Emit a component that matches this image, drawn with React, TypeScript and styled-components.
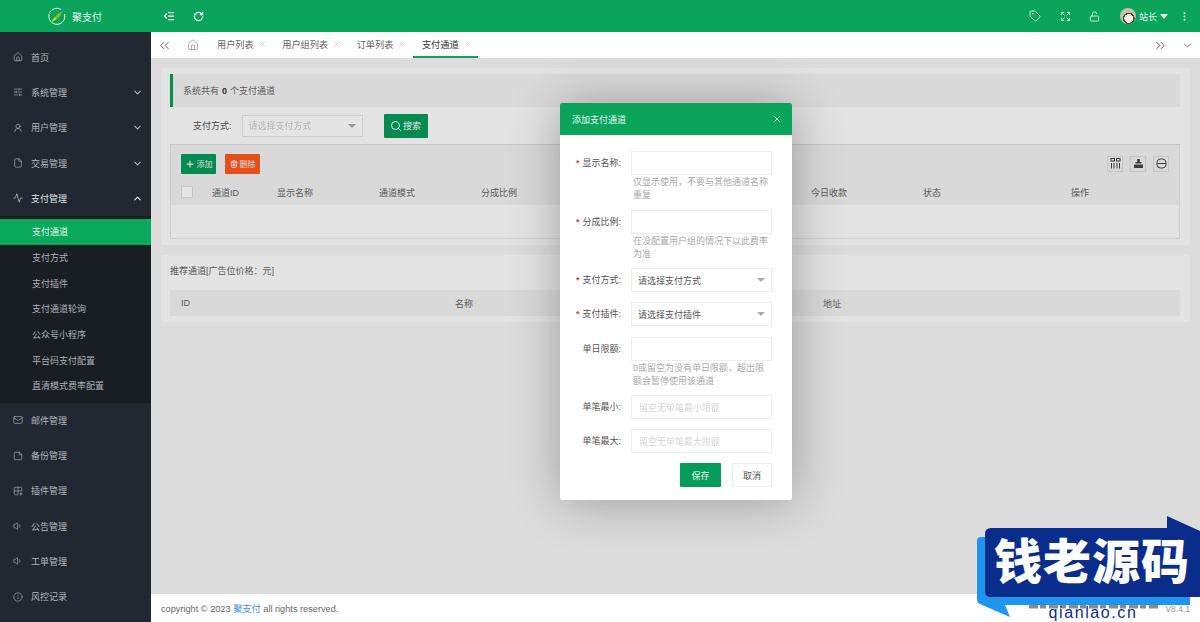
import React from 'react';
import styled, { createGlobalStyle } from 'styled-components';
import {
  Home, SlidersHorizontal, UserRound, File, Activity, Mail, StickyNote, Grid2x2Plus, Volume1, Info,
  ChevronDown, ChevronUp, ChevronsLeft, ChevronsRight, X, Plus, Trash2, Search, Tag, Expand, LockOpen,
  RotateCw, IndentDecrease, EllipsisVertical,
} from 'lucide-react';

const GlobalStyle = createGlobalStyle`
  html, body { margin: 0; padding: 0; height: 100%; overflow: hidden; }
  #root { height: 100%; }
  * { box-sizing: border-box; }
  body { font-family: "Liberation Sans", "Noto Sans CJK SC", sans-serif; font-size: 9px; color: #666; }
`;

const menuTop = [
  { label: '首页', icon: Home },
  { label: '系统管理', icon: SlidersHorizontal, arrow: true },
  { label: '用户管理', icon: UserRound, arrow: true },
  { label: '交易管理', icon: File, arrow: true },
];
const subMenu = ['支付通道', '支付方式', '支付插件', '支付通道轮询', '公众号小程序', '平台码支付配置', '直清模式费率配置'];
const menuBottom = [
  { label: '邮件管理', icon: Mail },
  { label: '备份管理', icon: StickyNote },
  { label: '插件管理', icon: Grid2x2Plus },
  { label: '公告管理', icon: Volume1 },
  { label: '工单管理', icon: Volume1 },
  { label: '风控记录', icon: Info },
];
const tabs = ['用户列表', '用户组列表', '订单列表', '支付通道'];
const columns = [
  { label: '通道ID', w: 65 },
  { label: '显示名称', w: 102 },
  { label: '通道模式', w: 102 },
  { label: '分成比例', w: 330 },
  { label: '今日收款', w: 112 },
  { label: '状态', w: 148 },
  { label: '操作', w: 60 },
];

const Page = styled.div`
  display: flex;
  flex-direction: column;
  width: 1200px;
  height: 622px;
  overflow: hidden;
  position: relative;
`;

const TopBar = styled.header`
  display: flex;
  align-items: center;
  height: 32px;
  flex: none;
  background: #0aa45b;
  color: #fff;
`;

const Brand = styled.div`
  width: 151px;
  display: flex;
  align-items: center;
  gap: 6px;
  padding-left: 48px;
  font-size: 10px;
  color: #e8f7ef;
`;

const TopTools = styled.div`
  display: flex;
  align-items: center;
  gap: 18px;
  padding-left: 12px;
  flex: 1;
`;

const TopRight = styled.div`
  display: flex;
  align-items: center;
  color: #cfeedd;
  padding-right: 10px;
  gap: 18.5px;
`;

const UserBox = styled.div`
  display: flex;
  align-items: center;
  gap: 3px;
  margin-left: 1px;
`;

const Avatar = styled.span`
  width: 16px;
  height: 16px;
  border-radius: 50%;
  background: radial-gradient(circle at 55% 65%, #f4efe6 0 32%, #4a443b 33% 42%, #c8bda9 43%);
`;

const UserName = styled.span`
  display: flex;
  align-items: center;
  gap: 3px;
  font-size: 9px;
  color: #e8f7ef;
  margin-right: 8px;
  &::after {
    content: '';
    border: 4px solid transparent;
    border-top: 5px solid #e8f7ef;
    border-bottom: 0;
  }
`;

const Body = styled.div`
  display: flex;
  flex: 1;
  min-height: 0;
`;

const Sidebar = styled.nav`
  width: 151px;
  flex: none;
  background: #212832;
  padding-top: 7.5px;
  color: #b4b8bd;
`;

const MenuItem = styled.div`
  height: 35.3px;
  display: flex;
  align-items: center;
  padding: 0 8px 0 13px;
  gap: 8px;
  font-size: 9px;
  color: ${p => (p.$open ? '#dfe2e5' : '#b4b8bd')};
`;

const MenuLabel = styled.span`
  flex: 1;
`;

const SubList = styled.div`
  background: #191e22;
  padding: 3px 0 4px;
`;

const SubItem = styled.div`
  height: 25.67px;
  display: flex;
  align-items: center;
  padding-left: 32px;
  font-size: 9px;
  color: ${p => (p.$active ? '#e6f7ee' : '#adb1b5')};
  background: ${p => (p.$active ? '#0aa95c' : 'transparent')};
`;

const Main = styled.main`
  flex: 1;
  min-width: 0;
  display: flex;
  flex-direction: column;
`;

const TabBar = styled.div`
  height: 26px;
  flex: none;
  display: flex;
  align-items: center;
  background: #fff;
  color: #666;
`;

const TabEdge = styled.span`
  width: 26px;
  display: flex;
  justify-content: center;
  align-items: center;
  color: #555;
`;

const TabHome = styled.span`
  width: 31px;
  display: flex;
  justify-content: center;
  color: #777;
`;

const Tab = styled.div`
  height: 26px;
  padding: 0 7.5px 0 9px;
  display: flex;
  align-items: center;
  gap: 5px;
  font-size: 9.2px;
  color: ${p => (p.$active ? '#333' : '#666')};
  border-bottom: 2px solid ${p => (p.$active ? '#0aa45b' : 'transparent')};
  svg { color: #bbb; }
`;

const TabRight = styled.div`
  margin-left: auto;
  display: flex;
  align-items: center;
  gap: 6px;
  color: #555;
`;

const Frame = styled.div`
  flex: 1;
  position: relative;
  min-height: 0;
  background: #f5f5f6;
  padding: 10px 10px 0;
  overflow: hidden;
`;

const Shade = styled.div`
  position: absolute;
  inset: 0;
  background: rgba(0, 0, 0, 0.1);
`;

const Card = styled.section`
  background: #fdfdfd;
  border-radius: 3px;
  padding: 6px 10px 6px 9px;
  margin-bottom: 10px;
`;

const Notice = styled.div`
  height: 33px;
  display: flex;
  align-items: center;
  padding-left: 10px;
  background: #f3f3f3;
  border-left: 3px solid #0a9f58;
  font-size: 9px;
  color: #666;
  b { margin: 0 3px; color: #333; }
`;

const FilterRow = styled.div`
  display: flex;
  align-items: center;
  height: 37px;
  padding-left: 23px;
  gap: 10px;
`;

const FilterLabel = styled.span`
  font-size: 9px;
  color: #555;
`;

const SelectFake = styled.div`
  width: 121px;
  height: 22px;
  border: 1px solid #e6e6e6;
  background: #fff;
  display: flex;
  align-items: center;
  justify-content: space-between;
  padding: 0 6px;
  color: #ccc;
  font-size: 9px;
  &::after {
    content: '';
    border: 4px solid transparent;
    border-top: 4px solid #aaa;
    border-bottom: 0;
  }
`;

const BlurText = styled.span`
  filter: blur(0.7px);
`;

const SearchBtn = styled.button`
  height: 24px;
  width: 44px;
  margin-left: 11px;
  border: 0;
  border-radius: 1px;
  background: #049b5b;
  color: #fff;
  font: inherit;
  display: flex;
  align-items: center;
  justify-content: center;
  gap: 1px;
  padding: 0;
`;

const TableBox = styled.div`
  border: 1px solid #e6e6e6;
  border-top-color: #ddd;
`;

const Toolbar = styled.div`
  height: 34px;
  background: #f2f2f2;
  display: flex;
  align-items: center;
  padding: 3px 10px 0 10px;
  gap: 9px;
`;

const ActionBtn = styled.button`
  height: 20px;
  width: ${p => p.$w}px;
  border: 0;
  border-radius: 1px;
  background: ${p => p.$bg};
  color: #f3f3f3;
  font: inherit;
  font-size: 8px;
  display: flex;
  align-items: center;
  justify-content: center;
  gap: 2px;
  padding: 0;
`;

const ToolIcons = styled.div`
  margin-left: auto;
  display: flex;
  gap: 7px;
`;

const ToolIcon = styled.span`
  width: 16px;
  height: 16px;
  border: 1px solid #ddd;
  display: flex;
  align-items: center;
  justify-content: center;
  color: #444;
`;

const HeadRow = styled.div`
  height: 26px;
  background: #f2f2f2;
  display: flex;
  align-items: center;
  padding-left: 10px;
  font-size: 9px;
  color: #666;
`;

const CheckBox = styled.span`
  width: 12px;
  height: 12px;
  border: 1px solid #ddd;
  background: #fff;
  margin-right: 19px;
`;

const HeadCell = styled.span`
  width: ${p => p.$w}px;
  flex: none;
`;

const EmptyRow = styled.div`
  height: 33px;
`;

const RecTitle = styled.div`
  height: 29px;
  display: flex;
  align-items: center;
  font-size: 9px;
  color: #666;
  padding-bottom: 11px;
`;

const RecHead = styled.div`
  height: 26px;
  background: #f2f2f2;
  display: grid;
  grid-template-columns: 274px 368px 1fr;
  align-items: center;
  padding-left: 11px;
  font-size: 9px;
  color: #666;
`;

const Modal = styled.div`
  position: absolute;
  left: 409px;
  top: 45px;
  width: 232px;
  height: 397px;
  background: #fff;
  border-radius: 2px;
  box-shadow: 1px 1px 50px rgba(0, 0, 0, 0.3);
`;

const ModalHead = styled.div`
  height: 32px;
  background: #0aa45b;
  border-radius: 2px 2px 0 0;
  display: flex;
  align-items: center;
  justify-content: space-between;
  padding: 0 10px 0 12px;
  color: #e6f7ee;
  font-size: 9px;
`;

const ModalForm = styled.div`
  display: flex;
  flex-direction: column;
  padding: 16px 20px 0 0;
`;

const FormRow = styled.div`
  display: flex;
  margin-bottom: ${p => p.$mb}px;
`;

const FormLabel = styled.label`
  width: 71px;
  flex: none;
  padding-top: 6.5px;
  padding-right: 10px;
  text-align: right;
  font-size: 9px;
  color: #555;
  line-height: 11px;
  em { color: #e0492f; font-style: normal; margin-right: 3px; font-weight: bold; }
`;

const FormField = styled.div`
  flex: 1;
  min-width: 0;
`;

const TextInput = styled.div`
  height: 24px;
  border: 1px solid #eee;
  padding: 0 7px;
  display: flex;
  align-items: center;
  font-size: 9px;
  color: #d4d4d4;
`;

const Hint = styled.div`
  font-size: 9px;
  line-height: 12.5px;
  color: #aaa;
  padding: 1px 2px 0;
`;

const ModalSelect = styled(SelectFake)`
  width: 100%;
  height: 24px;
  border-color: #eee;
  color: #555;
`;

const ModalBtns = styled.div`
  display: flex;
  justify-content: flex-end;
  gap: 11px;
  margin-top: 10px;
`;

const SaveBtn = styled.button`
  width: 41px;
  height: 24px;
  border: 0;
  border-radius: 1px;
  background: #049b5b;
  color: #e6f7ee;
  font: inherit;
  padding: 0;
`;

const CancelBtn = styled(SaveBtn)`
  width: 40px;
  background: #fff;
  border: 1px solid #eee;
  color: #555;
`;

const Footer = styled.footer`
  height: 28px;
  flex: none;
  display: flex;
  align-items: center;
  justify-content: space-between;
  padding: 0 10px;
  background: #fff;
  font-size: 9.2px;
  color: #666;
  a { color: #4a90e2; text-decoration: none; }
`;

const Version = styled.span`
  font-size: 8.5px;
  color: #999;
  padding-top: 2px;
`;

const Watermark = styled.svg`
  position: absolute;
  right: 0;
  bottom: 0;
`;

const Field = ({ label, req, mb, children }: { label: string; req?: boolean; mb: number; children: React.ReactNode }) => (
  <FormRow $mb={mb}>
    <FormLabel>{req && <em>*</em>}{label}:</FormLabel>
    <FormField>{children}</FormField>
  </FormRow>
);

const LogoMark = () => (
  <svg width="18" height="18" viewBox="0 0 18 18" fill="none">
    <path d="M13 2.5 A8 8 0 1 0 16.5 7" stroke="#e9f7dd" strokeWidth="1" />
    <path d="M3.5 15 C6 9 10 7 14 4.5 C13 9.5 9 13 3.5 15Z" fill="#7fc31c" />
    <path d="M3.5 15 L7 10.5 L8 12Z" fill="#f0e23a" />
    <circle cx="14.8" cy="3" r="1.6" fill="#1c8fc9" />
  </svg>
);

const ColsIcon = () => (
  <svg width="11" height="11" viewBox="0 0 11 11" fill="none" stroke="currentColor" strokeWidth="1">
    <rect x="1" y="0.5" width="3.5" height="2.5" />
    <rect x="6.5" y="0.5" width="3.5" height="2.5" />
    <path d="M1.5 5V10.5M4 5V10.5M7 5V10.5M9.5 5V10.5" />
  </svg>
);

const ExportIcon = () => (
  <svg width="11" height="11" viewBox="0 0 11 11" fill="currentColor">
    <path d="M4.2 1H6.8V4H8.5V5.5H2.5V4H4.2Z" />
    <path d="M1 6.5H10V10H1Z" />
  </svg>
);

const PrintIcon = () => (
  <svg width="11" height="11" viewBox="0 0 11 11" fill="none" stroke="currentColor" strokeWidth="1">
    <rect x="1" y="1" width="9" height="9" rx="3.5" />
    <path d="M1 5.5H10" />
  </svg>
);

const App = () => {
  return (
    <Page>
      <GlobalStyle />
      <TopBar>
        <Brand><LogoMark />聚支付</Brand>
        <TopTools>
          <IndentDecrease size={12} strokeWidth={2.5} />
          <RotateCw size={11} strokeWidth={2.6} />
        </TopTools>
        <TopRight>
          <Tag size={12} />
          <Expand size={11} />
          <LockOpen size={11} />
          <UserBox>
            <Avatar />
            <UserName>站长</UserName>
            <EllipsisVertical size={11} strokeWidth={2.5} />
          </UserBox>
        </TopRight>
      </TopBar>
      <Body>
        <Sidebar>
          {menuTop.map(({ label, icon: Icon, arrow }) => (
            <MenuItem key={label}>
              <Icon size={10} strokeWidth={1.5} />
              <MenuLabel>{label}</MenuLabel>
              {arrow && <ChevronDown size={11} strokeWidth={2.2} />}
            </MenuItem>
          ))}
          <MenuItem $open>
            <Activity size={10} strokeWidth={1.5} />
            <MenuLabel>支付管理</MenuLabel>
            <ChevronUp size={11} strokeWidth={2.6} />
          </MenuItem>
          <SubList>
            {subMenu.map((s, i) => <SubItem key={s} $active={i === 0}>{s}</SubItem>)}
          </SubList>
          {menuBottom.map(({ label, icon: Icon }) => (
            <MenuItem key={label}>
              <Icon size={10} strokeWidth={1.5} />
              <MenuLabel>{label}</MenuLabel>
            </MenuItem>
          ))}
        </Sidebar>
        <Main>
          <TabBar>
            <TabEdge><ChevronsLeft size={15} strokeWidth={1.5} /></TabEdge>
            <TabHome><Home size={12} strokeWidth={1.2} /></TabHome>
            {tabs.map((t, i) => (
              <Tab key={t} $active={i === 3}>{t}<X size={7} /></Tab>
            ))}
            <TabRight>
              <ChevronsRight size={15} strokeWidth={1.5} />
              <TabEdge><ChevronDown size={13} strokeWidth={1.3} /></TabEdge>
            </TabRight>
          </TabBar>
          <Frame>
            <Card>
              <Notice>系统共有<b>0</b>个支付通道</Notice>
              <FilterRow>
                <FilterLabel>支付方式:</FilterLabel>
                <SelectFake><BlurText>请选择支付方式</BlurText></SelectFake>
                <SearchBtn><Search size={12} />搜索</SearchBtn>
              </FilterRow>
              <TableBox>
                <Toolbar>
                  <ActionBtn $w={35} $bg="#049b5b"><Plus size={10} strokeWidth={3} />添加</ActionBtn>
                  <ActionBtn $w={35} $bg="#ff5a1e"><Trash2 size={8} strokeWidth={3} />删除</ActionBtn>
                  <ToolIcons>
                    <ToolIcon><ColsIcon /></ToolIcon>
                    <ToolIcon><ExportIcon /></ToolIcon>
                    <ToolIcon><PrintIcon /></ToolIcon>
                  </ToolIcons>
                </Toolbar>
                <HeadRow>
                  <CheckBox />
                  {columns.map(c => <HeadCell key={c.label} $w={c.w}>{c.label}</HeadCell>)}
                </HeadRow>
                <EmptyRow />
              </TableBox>
            </Card>
            <Card>
              <RecTitle>推荐通道[广告位价格：元]</RecTitle>
              <RecHead><span>ID</span><span>名称</span><span>地址</span></RecHead>
            </Card>
            <Shade />
            <Modal>
              <ModalHead>添加支付通道<X size={10} /></ModalHead>
              <ModalForm>
                <Field label="显示名称" req mb={9}>
                  <TextInput />
                  <Hint>仅显示使用，不要与其他通道名称重复</Hint>
                </Field>
                <Field label="分成比例" req mb={8}>
                  <TextInput />
                  <Hint>在没配置用户组的情况下以此费率为准</Hint>
                </Field>
                <Field label="支付方式" req mb={10}>
                  <ModalSelect>请选择支付方式</ModalSelect>
                </Field>
                <Field label="支付插件" req mb={11}>
                  <ModalSelect>请选择支付插件</ModalSelect>
                </Field>
                <Field label="单日限额" mb={8}>
                  <TextInput />
                  <Hint>0或留空为没有单日限额，超出限额会暂停使用该通道</Hint>
                </Field>
                <Field label="单笔最小" mb={10}>
                  <TextInput><BlurText>留空无单笔最小限额</BlurText></TextInput>
                </Field>
                <Field label="单笔最大" mb={0}>
                  <TextInput><BlurText>留空无单笔最大限额</BlurText></TextInput>
                </Field>
                <ModalBtns>
                  <SaveBtn>保存</SaveBtn>
                  <CancelBtn>取消</CancelBtn>
                </ModalBtns>
              </ModalForm>
            </Modal>
          </Frame>
          <Footer>
            <span>copyright © 2023 <a>聚支付</a> all rights reserved.</span>
            <Version>V8.4.1</Version>
          </Footer>
        </Main>
      </Body>
      <Watermark width="223" height="106" viewBox="0 0 223 106">
        <line x1="52" y1="90.5" x2="181" y2="90.5" stroke="#8a8a8a" strokeWidth="4" strokeDasharray="9 2 6 3" />
        <path d="M4 21 H213 V89 H28 L33 101 L3 88 Q0 87 0 83 V25 Q0 21 4 21Z" fill="#1e96f0" />
        <path d="M14 12 H190 L190 0 L223 15 V81 H14 Q8 81 8 75 V18 Q8 12 14 12Z" fill="#0a2d8c" />
        <text x="115" y="63" textAnchor="middle" fill="#fff" fontFamily="'Noto Sans CJK SC', sans-serif" fontWeight="900" fontSize="48" letterSpacing="1">钱老源码</text>
        <text x="116" y="102" textAnchor="middle" fill="#0a2d8c" fontFamily="'Liberation Sans', sans-serif" fontSize="16" letterSpacing="1.6">qianlao.cn</text>
      </Watermark>
    </Page>
  );
};

export default App;
